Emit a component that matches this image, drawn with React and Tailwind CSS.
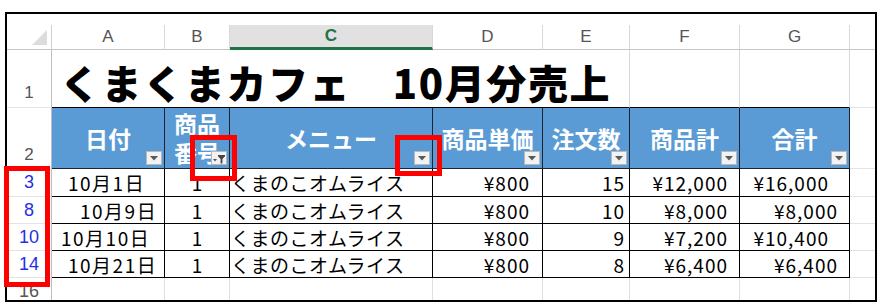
import React from 'react'

const jp = "font-['Noto_Sans_CJK_JP','Noto_Sans_CJK_SC',sans-serif]"
const ui = "font-['Liberation_Sans','Noto_Sans',sans-serif]"

const letters = ['A', 'B', 'C', 'D', 'E', 'F', 'G']

const headers = [
  { label: '日付' },
  { label: '商品\n番号', filter: true },
  { label: 'メニュー' },
  { label: '商品単価' },
  { label: '注文数' },
  { label: '商品計' },
  { label: '合計' },
]

const rows = [
  { n: '3', date: '10月1日', datePad: 'pl-[16px]', qty: '15', sub: '¥12,000', total: '¥16,000', totalPad: 'pr-[20px]' },
  { n: '8', date: '10月9日', datePad: 'pl-[28px]', qty: '10', sub: '¥8,000', total: '¥8,000', totalPad: 'pr-[11px]' },
  { n: '10', date: '10月10日', datePad: 'pl-[9px]', qty: '9', sub: '¥7,200', total: '¥10,400', totalPad: 'pr-[20px]' },
  { n: '14', date: '10月21日', datePad: 'pl-[16px]', qty: '8', sub: '¥6,400', total: '¥6,400', totalPad: 'pr-[11px]' },
]

function DropBtn({ filter }) {
  return (
    <span className="absolute right-[2px] bottom-[3px] flex h-[14px] w-[16px] items-center justify-center border border-[#b8b8b8] bg-[#f2f2f2]">
      {filter ? (
        <svg width="14" height="12" viewBox="0 0 14 12">
          <path d="M1 7h4L3 9.5z" fill="#555" />
          <path d="M6 3h7v1.2L10.4 7v4.5H8.6V7L6 4.2z" fill="#444" />
        </svg>
      ) : (
        <svg width="8" height="5" viewBox="0 0 8 5">
          <path d="M0 0h8L4 4.5z" fill="#595959" />
        </svg>
      )}
    </span>
  )
}

function RowNum({ children, blue }) {
  return (
    <div
      className={`flex items-center justify-center border-r border-b border-r-[#bdbdbd] border-b-[#e3e3e3] ${ui} text-[18px] ${blue ? 'text-[#1f2fe8]' : 'text-[#555]'}`}
    >
      {children}
    </div>
  )
}

export default function App() {
  return (
    <div className="relative h-[307px] w-[886px] overflow-hidden bg-white">
      <div className="ml-[5px] mt-[12px] h-[290px] w-[872px] overflow-hidden border-2 border-black bg-white pt-[11px]">
        <div className="grid grid-cols-[45px_113px_65px_203px_110px_87px_110px_110px_1fr] grid-rows-[25px_58px_61px_28px_27px_27px_27px_27px_27px]">
          {/* column letters */}
          <div className="relative border-r border-b border-r-[#d0d0d0] border-b-[#c6c6c6]">
            <svg className="absolute right-[4px] bottom-[4px]" width="15" height="15" viewBox="0 0 15 15">
              <path d="M15 0v15H0z" fill="#dcdcdc" />
            </svg>
          </div>
          {letters.map((l) => (
            <div
              key={l}
              className={`flex items-center justify-center border-r border-r-[#d8d8d8] ${ui} text-[17px] ${
                l === 'C'
                  ? 'border-b-[3px] border-b-[#217346] bg-[#e1e1e1] font-bold text-[#217346]'
                  : 'border-b border-b-[#c6c6c6] text-[#555]'
              }`}
            >
              {l}
            </div>
          ))}
          <div className="border-b border-b-[#c6c6c6]" />

          {/* row 1 */}
          <div className={`flex items-end justify-center border-r border-b border-r-[#bdbdbd] border-b-[#e3e3e3] pb-[2px] ${ui} text-[17px] text-[#555]`}>
            1
          </div>
          <div className={`col-span-5 flex items-end overflow-visible border-r border-b border-r-[#d8d8d8] border-b-black pb-[5px] pl-[8px] ${jp} whitespace-nowrap text-[40px] font-black leading-none tracking-[1.6px] text-black`}>
            くまくまカフェ　10月分売上
          </div>
          <div className="border-r border-b border-r-[#d8d8d8] border-b-black" />
          <div className="border-r border-b border-r-[#d8d8d8] border-b-black" />
          <div className="border-b border-b-[#e3e3e3]" />

          {/* row 2 headers */}
          <div className={`flex items-end justify-center border-r border-b border-r-[#bdbdbd] border-b-[#e3e3e3] pb-[1px] ${ui} text-[17px] text-[#555]`}>
            2
          </div>
          {headers.map((h) => (
            <div
              key={h.label}
              className={`relative flex items-center justify-center border-r border-b border-[#1b2430] bg-[#5b9bd5] ${jp} whitespace-pre-line text-center text-[23px] font-bold text-white ${
                h.filter ? 'leading-[29px]' : 'leading-none'
              }`}
            >
              {h.label}
              <DropBtn filter={h.filter} />
            </div>
          ))}
          <div className="border-b border-b-[#e3e3e3]" />

          {/* data rows */}
          {rows.map((r) => (
            <React.Fragment key={r.n}>
              <RowNum blue>{r.n}</RowNum>
              <div className={`flex items-center border-r border-b border-black pt-[2px] ${r.datePad} ${jp} whitespace-nowrap text-[19px] tracking-[1.5px] text-black`}>
                {r.date}
              </div>
              <div className={`flex items-center justify-center border-r border-b border-black pt-[2px] ${jp} text-[19px] text-black`}>
                1
              </div>
              <div className={`flex items-center border-r border-b border-black pt-[2px] pl-[1px] ${jp} whitespace-nowrap text-[19px] tracking-[0.5px] text-black`}>
                くまのこオムライス
              </div>
              <div className={`flex items-center justify-end border-r border-b border-black pt-[2px] pr-[12px] ${jp} text-[19px] tracking-[1px] text-black`}>
                ¥800
              </div>
              <div className={`flex items-center justify-end border-r border-b border-black pt-[2px] pr-[4px] ${jp} text-[19px] tracking-[1px] text-black`}>
                {r.qty}
              </div>
              <div className={`flex items-center justify-end border-r border-b border-black pt-[2px] pr-[11px] ${jp} text-[19px] tracking-[1px] text-black`}>
                {r.sub}
              </div>
              <div className={`flex items-center justify-end border-r border-b border-black pt-[2px] ${r.totalPad} ${jp} text-[19px] tracking-[1px] text-black`}>
                {r.total}
              </div>
              <div className="border-b border-b-[#e3e3e3]" />
            </React.Fragment>
          ))}

          {/* row 16 */}
          <RowNum>16</RowNum>
          {letters.map((l) => (
            <div key={l} className="border-r border-b border-[#e0e0e0]" />
          ))}
          <div className="border-b border-b-[#e3e3e3]" />
        </div>
      </div>

      {/* red annotation boxes */}
      <div className="absolute left-[190px] top-[135px] h-[46px] w-[47px] border-[5px] border-[#ff0000]" />
      <div className="absolute left-[395px] top-[135px] h-[41px] w-[47px] border-[5px] border-[#ff0000]" />
      <div className="absolute left-[4px] top-[166px] h-[121px] w-[46px] border-[5px] border-[#ff0000]" />
    </div>
  )
}
